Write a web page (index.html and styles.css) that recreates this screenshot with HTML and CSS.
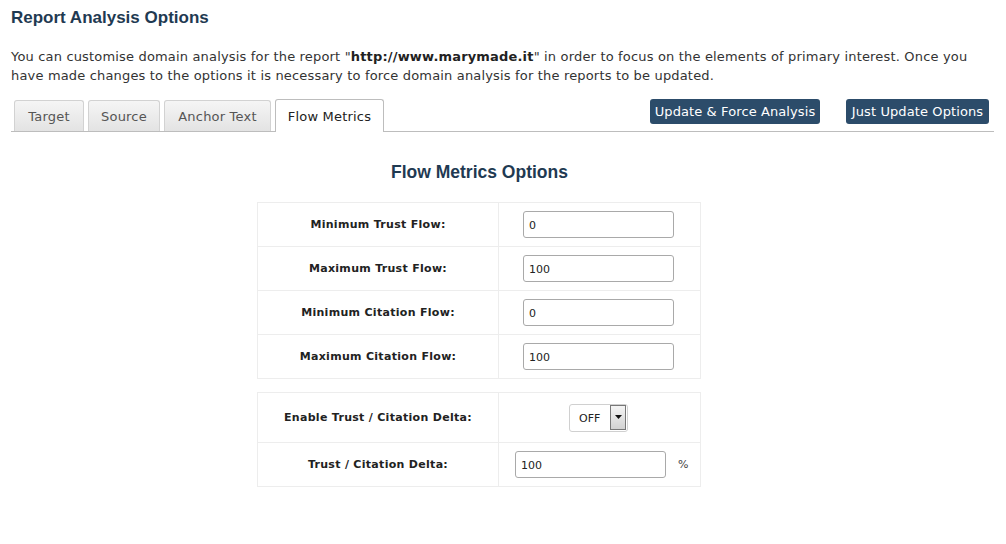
FILE: index.html
```html
<!DOCTYPE html>
<html>
<head>
<meta charset="utf-8">
<link rel="stylesheet" href="styles.css">
</head>
<body>
<div class="page">
  <h1 class="title">Report Analysis Options</h1>
  <p class="intro">You can customise domain analysis for the report "<b>http://www.marymade.it</b>" in order to focus on the elements of primary interest. Once you have made changes to the options it is necessary to force domain analysis for the reports to be updated.</p>
  <div class="tabbar">
    <div class="tabs">
      <div class="tab t-target">Target</div>
      <div class="tab t-source">Source</div>
      <div class="tab t-anchor">Anchor Text</div>
      <div class="tab active t-flow">Flow Metrics</div>
    </div>
    <div class="actions">
      <button class="btn">Update &amp; Force Analysis</button>
      <button class="btn">Just Update Options</button>
    </div>
  </div>
  <h2 class="section-title">Flow Metrics Options</h2>
  <table class="opts">
    <tr><td class="lbl">Minimum Trust Flow:</td><td class="val"><input class="field" value="0"></td></tr>
    <tr><td class="lbl">Maximum Trust Flow:</td><td class="val"><input class="field" value="100"></td></tr>
    <tr><td class="lbl">Minimum Citation Flow:</td><td class="val"><input class="field" value="0"></td></tr>
    <tr><td class="lbl">Maximum Citation Flow:</td><td class="val"><input class="field" value="100"></td></tr>
  </table>
  <table class="opts second">
    <tr class="tall"><td class="lbl">Enable Trust / Citation Delta:</td><td class="val center">
      <div class="select"><span class="sel-text">OFF</span><span class="sel-arrow"><svg width="7" height="4" viewBox="0 0 7 4"><path d="M0 0H7L3.5 4Z" fill="#111"/></svg></span></div>
    </td></tr>
    <tr><td class="lbl">Trust / Citation Delta:</td><td class="val delta"><input class="field" value="100"><span class="pct">%</span></td></tr>
  </table>
</div>
</body>
</html>
```

FILE: styles.css
```css
* { box-sizing: border-box; }
html, body { margin: 0; padding: 0; background: #fff; }
body { font-family: "DejaVu Sans", Verdana, sans-serif; color: #333; }
.page { padding: 0 12px 0 11px; width: 1006px; }
.title {
  font-family: "Liberation Sans", Arial, sans-serif;
  font-size: 17px; font-weight: bold; color: #1f3a52;
  margin: 0; padding-top: 9px; height: 47px; line-height: 18px;
}
.intro {
  margin: 0; font-size: 13px; line-height: 19px; color: #333;
  letter-spacing: 0.17px; width: 975px;
}
.intro b { color: #222; }
.tabbar {
  display: flex; justify-content: space-between; align-items: flex-start;
  margin-top: 14px; border-bottom: 1px solid #bdbdbd; height: 33px;
}
.tabs { display: flex; padding-left: 3px; gap: 4px; align-items: flex-end; height: 32px; }
.tab {
  height: 31px; font-size: 13px; color: #555; letter-spacing: 0.2px;
  border: 1px solid #d2d2d2; border-bottom: none;
  border-radius: 3px 3px 0 0;
  background: linear-gradient(#f5f5f5, #e3e3e3);
  display: flex; align-items: center; justify-content: center;
  padding-top: 1px;
}
.t-target { width: 70px; }
.t-source { width: 72px; }
.t-anchor { width: 107px; }
.t-flow { width: 109px; }
.tab.active {
  height: 33px; background: #fff; color: #222; border-color: #bdbdbd;
  margin-bottom: -1px; padding-top: 0;
}
.actions { display: flex; gap: 26px; margin-top: 0; padding-right: 5px; }
.btn {
  font-family: "DejaVu Sans", Verdana, sans-serif;
  font-size: 13px; color: #fff; background: #2c4c6a; letter-spacing: 0.1px;
  border: none; border-radius: 3px; height: 25px; padding: 0 2px;
  line-height: 25px; white-space: nowrap;
}
.btn:first-child { width: 170px; }
.btn:last-child { width: 143px; }
.section-title {
  font-family: "Liberation Sans", Arial, sans-serif;
  font-size: 17.5px; font-weight: bold; color: #1f3a52;
  text-align: center; margin: 31px 0 0 0; line-height: 18px; height: 39px;
  padding-right: 46px;
}
.opts {
  border-collapse: collapse; margin-left: 246px; width: 444px;
}
.opts td { border: 1px solid #ededed; height: 44px; padding: 0; }
.opts .lbl {
  width: 241px; text-align: center; font-weight: bold;
  font-size: 11px; color: #222; letter-spacing: 0.3px;
}
.opts .val { padding-left: 24px; }
.field {
  width: 151px; height: 27px; border: 1px solid #a9a9a9; border-radius: 3px;
  font-family: "DejaVu Sans", Verdana, sans-serif; font-size: 11px; color: #222;
  padding: 2px 0 0 5px; outline: none; vertical-align: middle;
}
.second { margin-top: 13px; }
.second tr.tall td { height: 50px; }
.val.center { padding-left: 70px; }
.select {
  display: inline-flex; width: 59px; height: 28px; border: 1px solid #d0d0d0;
  border-radius: 3px; background: #fff; vertical-align: middle;
}
.sel-text { font-size: 11px; color: #222; flex: 1; display: flex; align-items: center; padding-left: 9px; padding-top: 2px; }
.sel-arrow {
  width: 16px; margin: 0 1px 1px 0; border: 1px solid #777; background: linear-gradient(#f4f4f4, #d2d2d2);
  display: flex; align-items: center; justify-content: center;
}
.val.delta { padding-left: 16px; }
.pct { font-size: 11px; color: #444; margin-left: 12px; vertical-align: middle; }
```
